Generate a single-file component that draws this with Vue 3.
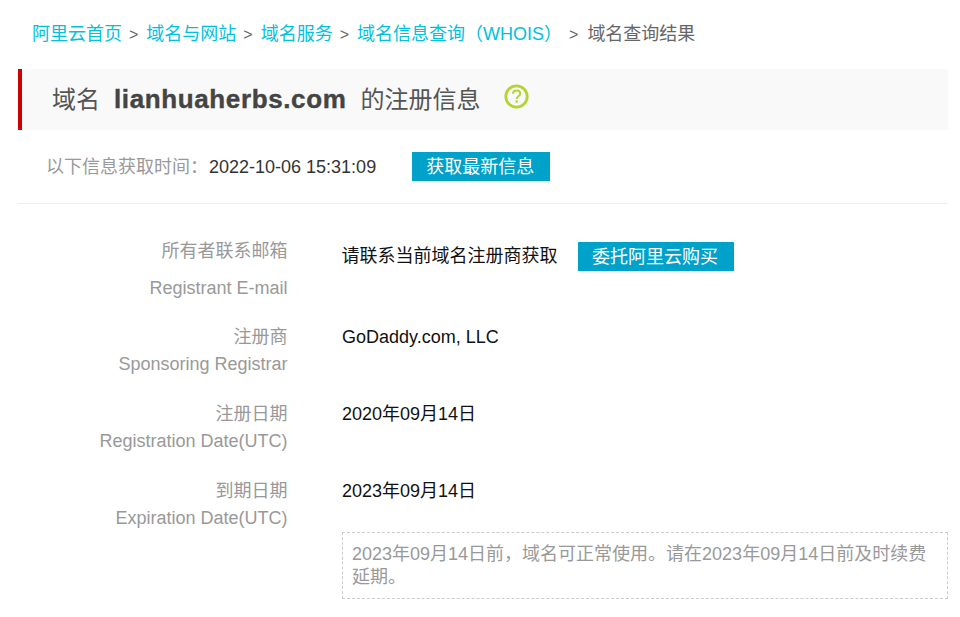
<script setup>
const crumbs = ['阿里云首页', '域名与网站', '域名服务', '域名信息查询（WHOIS）']
const rows = [
  { cn: '注册商', en: 'Sponsoring Registrar', value: 'GoDaddy.com, LLC' },
  { cn: '注册日期', en: 'Registration Date(UTC)', value: '2020年09月14日' },
  { cn: '到期日期', en: 'Expiration Date(UTC)', value: '2023年09月14日' }
]
</script>

<template>
  <div class="page">
    <nav class="crumbs">
      <template v-for="c in crumbs" :key="c">
        <a class="link">{{ c }}</a>
        <span class="sep">&gt;</span>
      </template>
      <span class="current">域名查询结果</span>
    </nav>

    <header class="title">
      <h1>域名<b>lianhuaherbs.com</b>的注册信息</h1>
      <svg class="help" width="25" height="25" viewBox="0 0 25 25" fill="none">
        <circle cx="12.5" cy="12.5" r="10.7" stroke="#b4d433" stroke-width="2.8" />
        <path d="M8.9 9.8c.1-2.2 1.6-3.4 3.7-3.4 2.1 0 3.6 1.2 3.6 3 0 1.400-.8 2.100-1.800 2.800-1.100.8-1.700 1.300-1.700 2.800" stroke="#b4d433" stroke-width="2" />
        <rect x="11.500" y="16.400" width="2.200" height="2.300" fill="#b4d433" />
      </svg>
    </header>

    <div class="meta">
      <span class="meta-text">
        <span class="meta-label">以下信息获取时间：</span><span class="meta-time">2022-10-06 15:31:09</span>
      </span>
      <a class="btn btn-fetch">获取最新信息</a>
    </div>

    <section class="info">
      <div class="row row-first">
        <div class="label">
          <div class="cn-first">所有者联系邮箱</div>
          <div class="en-first">Registrant E-mail</div>
        </div>
        <div class="value value-first">
          <span>请联系当前域名注册商获取</span>
          <a class="btn btn-buy">委托阿里云购买</a>
        </div>
      </div>

      <div v-for="r in rows" :key="r.cn" class="row">
        <div class="label">
          <div>{{ r.cn }}</div>
          <div>{{ r.en }}</div>
        </div>
        <div class="value">{{ r.value }}</div>
      </div>

      <div class="row row-note">
        <div class="note">2023年09月14日前，域名可正常使用。请在2023年09月14日前及时续费延期。</div>
      </div>
    </section>
  </div>
</template>

<style scoped>
.page {
  box-sizing: border-box;
  width: 960px;
  padding: 0 12px 0 18px;
  font-family: "Liberation Sans", "Noto Sans CJK SC", sans-serif;
  font-size: 18px;
  color: #111;
  background: #fff;
}
.crumbs {
  display: flex;
  align-items: baseline;
  height: 69px;
  padding: 19px 0 0 14px;
  box-sizing: border-box;
  color: #666;
  white-space: nowrap;
}
.link { color: #00c1de; }
.sep { margin: 0 8px 0 7px; font-size: 16px; color: #666; }
.current { margin-left: 1px; color: #666; }
.title {
  display: flex;
  align-items: center;
  height: 61px;
  padding-left: 30px;
  background: #f9f9f9;
  border-left: 4px solid #c00;
}
h1 {
  margin: 0 0 5px;
  font-size: 24px;
  font-weight: 400;
  color: #555;
}
h1 b {
  margin: 0 14px;
  font-size: 26px;
  font-weight: 700;
  letter-spacing: 0.62px;
  -webkit-text-stroke: 0.4px #444;
  color: #444;
}
.help { margin: 0 0 7px 24px; }
.meta {
  display: flex;
  align-items: center;
  height: 74px;
  padding-left: 28px;
  box-sizing: border-box;
  border-bottom: 1px solid #eee;
}
.meta-text { margin-bottom: 4px; }
.meta-label { color: #999; }
.meta-time { margin-left: 1px; color: #333; }
.btn {
  display: inline-flex;
  align-items: center;
  justify-content: center;
  box-sizing: border-box;
  height: 29px;
  color: #fff;
  background: #00a2ca;
}
.btn-fetch { width: 138px; margin-left: 36px; padding: 0 2px 3px 0; }
.btn-buy { width: 156px; margin-left: 20px; padding: 1px 1px 0 0; }
.info { padding-top: 33px; }
.row {
  display: flex;
  min-height: 77px;
}
.row-first { min-height: 87px; }
.label {
  width: 269.5px;
  text-align: right;
  color: #999;
  line-height: 27px;
}
.cn-first { margin-top: 1px; }
.en-first { margin-top: 10px; }
.value {
  margin-left: 54.5px;
  line-height: 27px;
}
.value-first {
  display: flex;
  align-items: center;
  height: 29px;
  margin-top: 5px;
  margin-left: 54px;
}
.row-note { min-height: 0; margin-top: -23px; }
.note {
  box-sizing: border-box;
  width: 606px;
  margin-left: 324px;
  padding: 10px 9px 9px;
  border: 1px dashed #ccc;
  color: #999;
  line-height: 23px;
}
</style>
